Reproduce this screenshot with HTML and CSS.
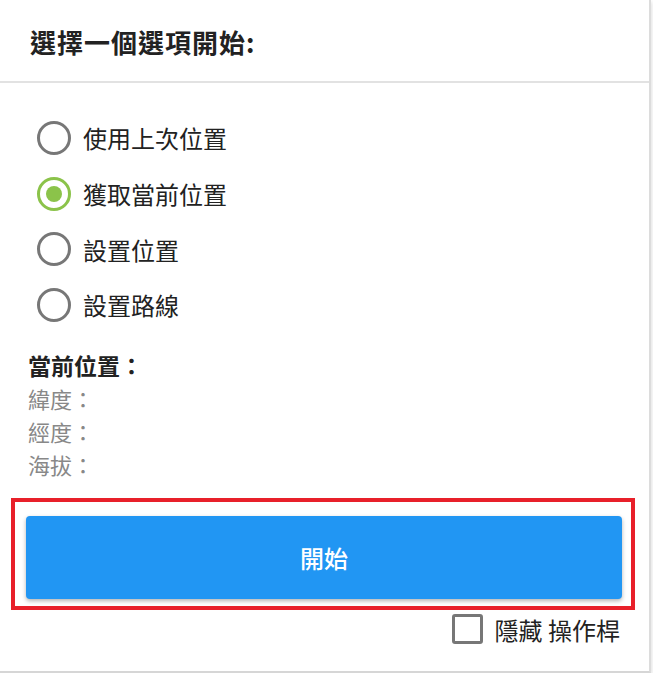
FILE: index.html
```html
<!DOCTYPE html>
<html lang="zh-Hant">
<head>
    <meta charset="UTF-8">
    <meta name="viewport" content="width=device-width, initial-scale=1.0">
    <title>選擇一個選項開始</title>
    <link rel="stylesheet" href="styles.css">
</head>
<body>
    <div class="panel">
        <div class="panel-header">
            <h3 class="title">選擇一個選項開始:</h3>
        </div>
        <div class="panel-body">
            <ul class="options">
                <li class="option"><span class="radio"></span><span>使用上次位置</span></li>
                <li class="option"><span class="radio checked"></span><span>獲取當前位置</span></li>
                <li class="option"><span class="radio"></span><span>設置位置</span></li>
                <li class="option"><span class="radio"></span><span>設置路線</span></li>
            </ul>

            <div class="location">
                <div class="location-title">當前位置：</div>
                <div class="location-line">緯度：</div>
                <div class="location-line">經度：</div>
                <div class="location-line">海拔：</div>
            </div>

            <div class="highlight">
                <button class="btn-start">開始</button>
            </div>

            <label class="toggle"><span class="checkbox"></span><span>隱藏 操作桿</span></label>
        </div>
    </div>
</body>
</html>
```

FILE: styles.css
```css
body {
    margin: 0;
    background: #fff;
    font-family: "Noto Sans CJK TC", "Noto Sans", sans-serif;
    color: #222;
}
.panel {
    width: 649px;
    height: 671px;
    background: white;
    border-right: 2px solid #dcdcdc;
    border-bottom: 2px solid #d6d6d6;
    box-shadow: 1px 2px 4px rgba(0, 0, 0, 0.12);
}
.panel-header {
    height: 83px;
    display: flex;
    align-items: center;
    padding: 2px 0 0 30px;
    box-sizing: border-box;
    border-bottom: 2px solid #e2e2e2;
}
.title {
    margin: 0;
    font-size: 26px;
    font-weight: bold;
    letter-spacing: 1px;
    color: #222;
}
.panel-body {
    padding: 27px 0 0 0;
}
.options {
    list-style: none;
    margin: 0;
    padding: 0 0 0 37px;
}
.option {
    height: 55.7px;
    display: flex;
    align-items: center;
    gap: 12px;
    font-size: 24px;
}
.radio {
    width: 34px;
    height: 34px;
    box-sizing: border-box;
    border: 3px solid #777;
    border-radius: 50%;
    display: flex;
    align-items: center;
    justify-content: center;
}
.radio.checked {
    border-color: #8bc34a;
}
.radio.checked::after {
    content: "";
    width: 16px;
    height: 16px;
    border-radius: 50%;
    background: #8bc34a;
}
.location {
    padding: 16px 0 0 28px;
    line-height: 33px;
    font-size: 22px;
}
.location-title {
    font-size: 23px;
    font-weight: bold;
    color: #222;
}
.location-line {
    color: #888;
}
.highlight {
    margin: 17px 14px 0 11px;
    border: 4px solid #e8202a;
    padding: 14px 9px 7px 11px;
}
.btn-start {
    display: block;
    width: 100%;
    height: 83px;
    border: none;
    border-radius: 4px;
    background: #2196f3;
    color: white;
    font-family: inherit;
    font-size: 24px;
    font-weight: 500;
    box-shadow: 0 2px 4px rgba(0, 0, 0, 0.3);
    cursor: pointer;
}
.toggle {
    display: flex;
    justify-content: flex-end;
    align-items: center;
    gap: 12px;
    padding: 2px 29px 0 0;
    font-size: 24px;
}
.checkbox {
    width: 31px;
    height: 30px;
    box-sizing: border-box;
    border: 3px solid #777;
    border-radius: 3px;
}
```
